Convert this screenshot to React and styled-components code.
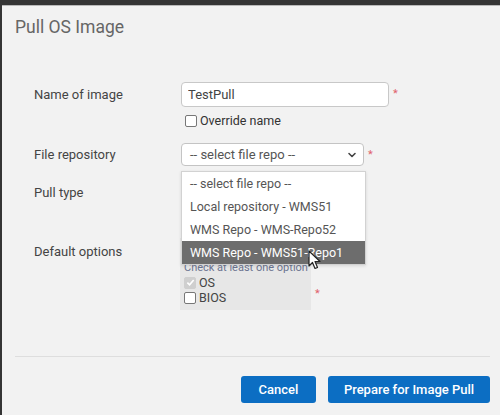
import React from "react";
import styled, { createGlobalStyle } from "styled-components";
import { ChevronDown } from "lucide-react";

const GlobalStyle = createGlobalStyle`
  html, body {
    margin: 0;
    padding: 0;
    background: #353535;
  }
  body {
    font-family: Roboto, "Liberation Sans", Arial, sans-serif;
  }
  * {
    box-sizing: border-box;
  }
`;

const repos = [
  "-- select file repo --",
  "Local repository - WMS51",
  "WMS Repo - WMS-Repo52",
  "WMS Repo - WMS51-Repo1",
];

const App = () => {
  return (
    <>
      <GlobalStyle />
      <Dialog>
        <Header>
          <Title>Pull OS Image</Title>
        </Header>
        <Body>
          <Row>
            <Label>Name of image</Label>
            <Control>
              <Line>
                <TextInput defaultValue="TestPull" />
                <Required>*</Required>
              </Line>
              <CheckLine>
                <Box />
                Override name
              </CheckLine>
            </Control>
          </Row>

          <Row $gap={14}>
            <Label $tall={23}>File repository</Label>
            <Control>
              <Line>
                <SelectWrap>
                  <Select>
                    <span>-- select file repo --</span>
                    <ChevronDown size={12} strokeWidth={3.2} color="#444" />
                  </Select>
                  <Menu>
                    {repos.map((r, i) => (
                      <MenuItem key={r} $active={i === 3}>
                        {r}
                      </MenuItem>
                    ))}
                    <Cursor width="14" height="20" viewBox="0 0 14 20">
                      <path
                        d="M1 1 L1 16 L4.5 12.5 L7 18.5 L9.5 17.5 L7 11.5 L12 11.5 Z"
                        fill="#fff"
                        stroke="#222"
                        strokeWidth="1.2"
                        strokeLinejoin="round"
                      />
                    </Cursor>
                  </Menu>
                </SelectWrap>
                <Required>*</Required>
              </Line>
            </Control>
          </Row>

          <Row $gap={16}>
            <Label $tall={22}>Pull type</Label>
            <Control>
              {/* options of this row sit under the open menu */}
              <HiddenArea />
            </Control>
          </Row>

          <Row $gap={12}>
            <Label $tall={22} $pad={3}>
              Default options
            </Label>
            <Control>
              <Line $end>
                <OptionsBox>
                  <Hint>Check at least one option</Hint>
                  <OptionLine>
                    <Box $checked $disabled>
                      <svg width="9" height="9" viewBox="0 0 10 10">
                        <path
                          d="M1.5 5.2 L4 7.6 L8.5 2.2"
                          fill="none"
                          stroke="#fff"
                          strokeWidth="1.8"
                        />
                      </svg>
                    </Box>
                    OS
                  </OptionLine>
                  <OptionLine>
                    <Box />
                    BIOS
                  </OptionLine>
                </OptionsBox>
                <Required $low>*</Required>
              </Line>
            </Control>
          </Row>
        </Body>
        <Footer>
          <Button>Cancel</Button>
          <Button $wide>Prepare for Image Pull</Button>
        </Footer>
      </Dialog>
    </>
  );
};

const Dialog = styled.div`
  margin: 5px 0 0 2px;
  height: 410px;
  background: #f2f2f2;
  border-top: 1px solid #b9b9b9;
  display: flex;
  flex-direction: column;
`;

const Header = styled.div`
  padding: 11px 13px 12px;
`;

const Title = styled.h1`
  margin: 0;
  font-size: 17.5px;
  line-height: 20px;
  font-weight: 400;
  color: #666;
`;

const Body = styled.div`
  padding: 33px 0 0 32px;
`;

const Row = styled.div`
  display: flex;
  align-items: flex-start;
  margin-top: ${(p) => p.$gap || 0}px;
`;

const Label = styled.div`
  width: 147px;
  flex-shrink: 0;
  font-size: 13px;
  line-height: ${(p) => p.$tall || 25}px;
  padding-top: ${(p) => p.$pad || 0}px;
  color: #444;
`;

const Control = styled.div`
  display: flex;
  flex-direction: column;
`;

const Line = styled.div`
  display: flex;
  align-items: ${(p) => (p.$end ? "flex-end" : "flex-start")};
`;

const Required = styled.span`
  color: #e0616b;
  font-size: 11px;
  line-height: 12px;
  margin-left: 4px;
  margin-top: 6px;
  margin-bottom: ${(p) => (p.$low ? "10px" : "0")};
`;

const TextInput = styled.input`
  width: 208px;
  height: 25px;
  border: 1px solid #c8c8c8;
  border-radius: 4px;
  background: #fff;
  padding: 0 6px;
  font-family: inherit;
  font-size: 13px;
  color: #444;
  outline: none;
`;

const CheckLine = styled.label`
  display: flex;
  align-items: center;
  gap: 3px;
  margin: 6px 0 0 4px;
  font-size: 12.5px;
  line-height: 16px;
  color: #333;
`;

const Box = styled.span`
  width: 12px;
  height: 12px;
  border-radius: 2px;
  border: 1px solid ${(p) => (p.$disabled ? "#cfcfcf" : "#777")};
  background: ${(p) => (p.$checked ? "#cfcfcf" : "#fff")};
  display: inline-flex;
  align-items: center;
  justify-content: center;
`;

const SelectWrap = styled.div`
  position: relative;
`;

const Select = styled.div`
  width: 183px;
  height: 23px;
  border: 1px solid #c4c4c4;
  border-radius: 4px;
  background: #fff;
  padding: 0 5px 0 8px;
  display: flex;
  align-items: center;
  justify-content: space-between;
  font-size: 13px;
  color: #555;
`;

const Menu = styled.ul`
  position: absolute;
  top: 28px;
  left: 0;
  width: 185px;
  margin: 0;
  padding: 0;
  list-style: none;
  background: #fff;
  border: 1px solid #d2d2d2;
  box-shadow: 0 1px 3px rgba(0, 0, 0, 0.12);
  z-index: 5;
`;

const MenuItem = styled.li`
  height: 23px;
  line-height: 23px;
  padding: 0 8px;
  font-size: 12.5px;
  white-space: nowrap;
  color: ${(p) => (p.$active ? "#fff" : "#555")};
  background: ${(p) => (p.$active ? "#6d6d6d" : "transparent")};
`;

const Cursor = styled.svg`
  position: absolute;
  left: 126px;
  top: 78px;
`;

const HiddenArea = styled.div`
  height: 44px;
`;

const OptionsBox = styled.div`
  width: 131px;
  margin-left: -1px;
  background: #e7e7e7;
  padding: 23px 4px 5px;
`;

const Hint = styled.div`
  font-size: 11px;
  line-height: 14px;
  color: #6c7590;
  white-space: nowrap;
`;

const OptionLine = styled.div`
  display: flex;
  align-items: center;
  gap: 3px;
  font-size: 12.5px;
  line-height: 15px;
  color: #444;
`;

const Footer = styled.div`
  margin: auto 10px 0 13px;
  border-top: 1px solid #dedede;
  padding: 19px 0 12px;
  display: flex;
  justify-content: flex-end;
  gap: 12px;
`;

const Button = styled.button`
  height: 27px;
  width: ${(p) => (p.$wide ? "162px" : "75px")};
  border: none;
  border-radius: 3px;
  background: #0c6ec3;
  color: #fff;
  font-family: inherit;
  font-size: 13px;
  font-weight: 500;
  cursor: pointer;
`;

export default App;
